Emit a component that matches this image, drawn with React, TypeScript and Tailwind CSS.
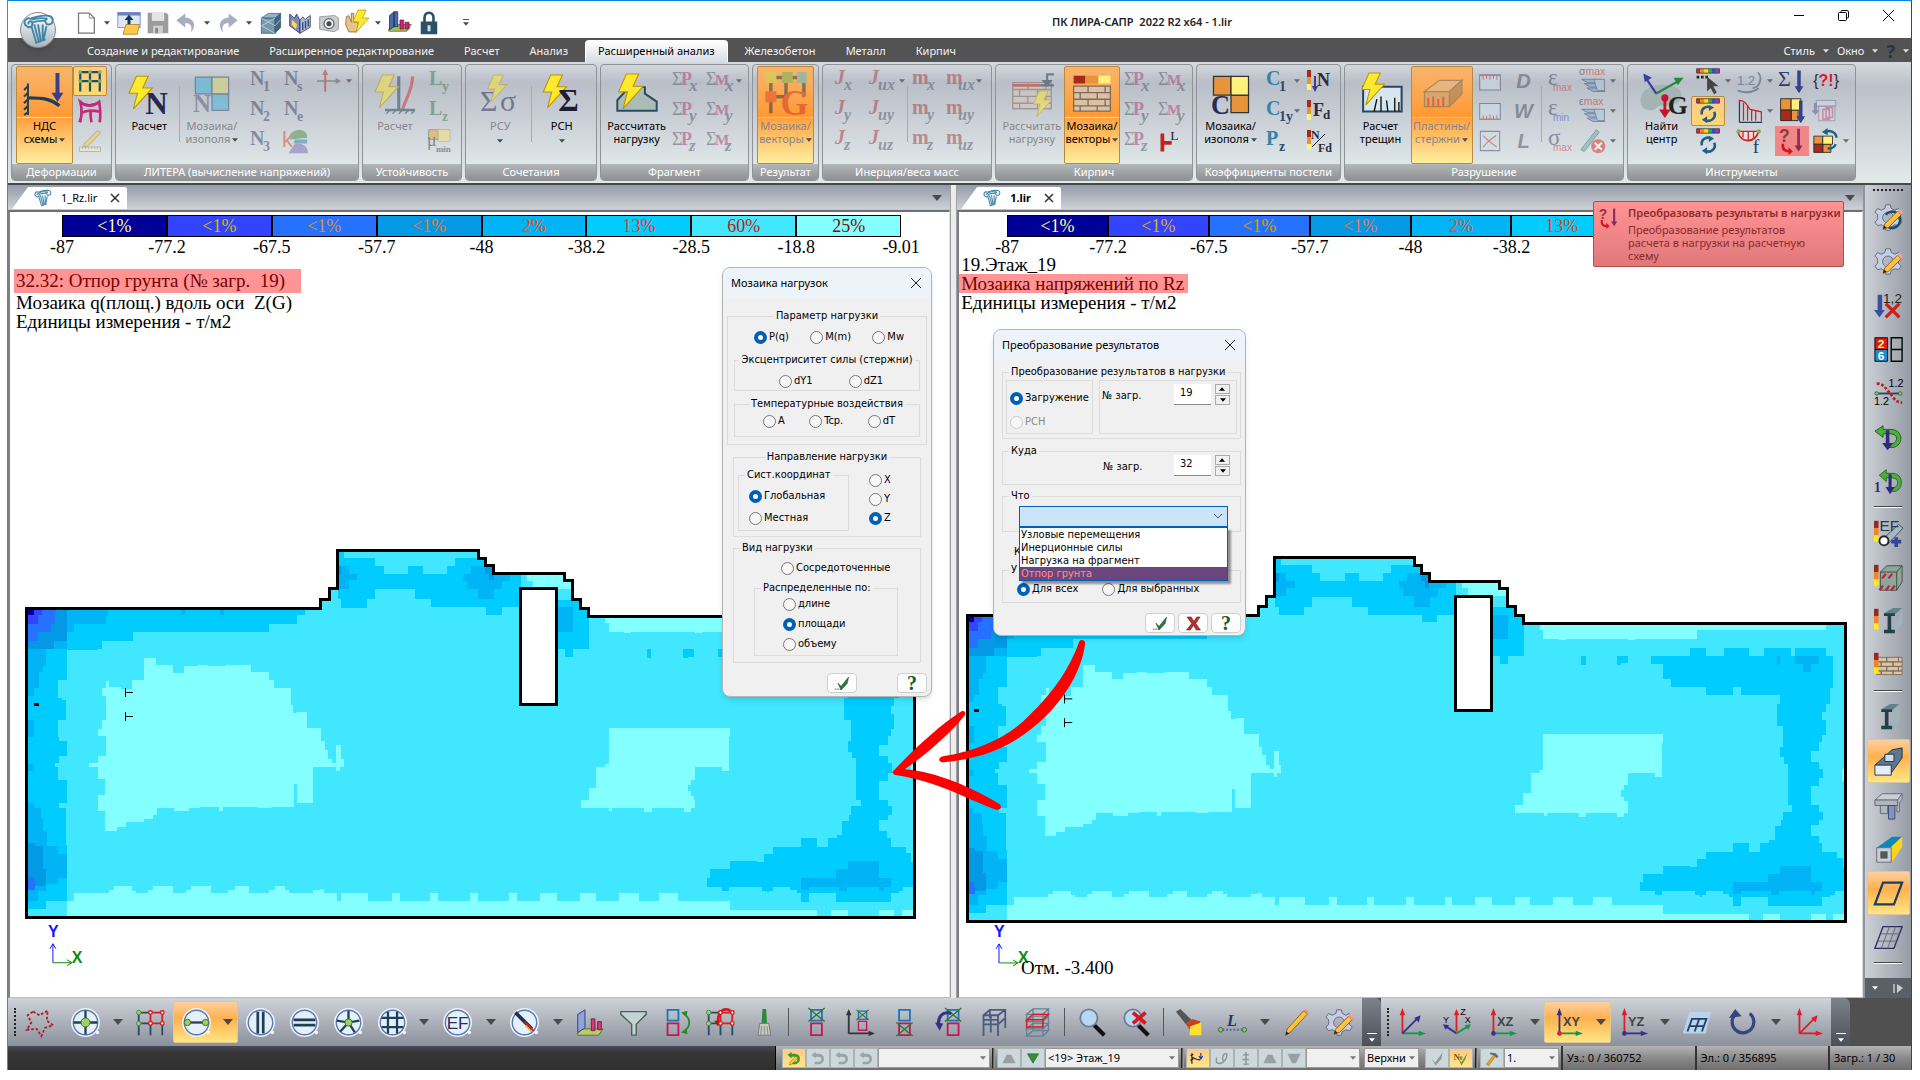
import React from 'react';

const SERIF = '"Liberation Serif", serif';

/* ---------- shared drawing helpers ---------- */

interface IconProps {
  w?: number;
  h?: number;
  box?: string;
  className?: string;
  children: React.ReactNode;
}

function Svg({ w = 28, h = 28, box = '0 0 32 32', className = '', children }: IconProps) {
  return (
    <svg width={w} height={h} viewBox={box} className={`block shrink-0 overflow-visible ${className}`} aria-hidden="true">
      {children}
    </svg>
  );
}

function Caret({ color = '#4a4a4a', big = false }: { color?: string; big?: boolean }) {
  return (
    <svg width={big ? 10 : 6} height={big ? 6 : 4} viewBox="0 0 10 6" className="block shrink-0" aria-hidden="true">
      <path d="M0 0h10L5 6z" fill={color} />
    </svg>
  );
}

const Bolt = ({ x = 0, y = 0, s = 1 }) => (
  <path
    transform={`translate(${x} ${y}) scale(${s})`}
    d="M7 0h11l-5 11h9L4 31l4-15H0z"
    fill="#ffe92e"
    stroke="#b99500"
    strokeWidth="1"
  />
);

/* letter with an index, like N1 or Cy */
function Sub({ a, b, color = '#3d3f66', subColor }: { a: string; b: string; color?: string; subColor?: string }) {
  const long = b.length > 2;
  const greek = a === 'ε' || a === 'σ';
  return (
    <Svg w={28} h={26} box="0 0 28 26">
      <text x="3" y="17" fontSize={greek ? 23 : 20} fontWeight={greek ? 'normal' : 'bold'} fontFamily={SERIF} fill={color}>{a}</text>
      <text x={long ? 8 : 16} y="23" fontSize={long ? 10 : 14} fontWeight={long ? 'normal' : 'bold'} fontFamily={long ? 'Liberation Sans' : SERIF} fill={subColor || color}>{b}</text>
    </Svg>
  );
}

/* sum sign with a coloured letter and an axis index */
function Sum({ a, b }: { a: string; b: string }) {
  return (
    <Svg w={28} h={26} box="0 0 28 26">
      <text x="1" y="17" fontSize="18" fontFamily={SERIF} fill="#505766">Σ</text>
      <text x="10" y="17" fontSize={a === 'M' ? 15 : 18} fontWeight="bold" fontFamily={SERIF} fill="#b03a76">{a}</text>
      <text x={a === 'M' ? 20 : 18} y="23" fontSize="17" fontStyle="italic" fontWeight="bold" fontFamily={SERIF} fill="#505766">{b}</text>
    </Svg>
  );
}

function Axis({ a, b, sans }: { a: string; b: string; sans?: boolean }) {
  return (
    <Svg w={32} h={26} box="0 0 32 26">
      <text x="3" y="16" fontSize="20" fontStyle={sans ? 'normal' : 'italic'} fontWeight="bold" fontFamily={SERIF} fill="#a8383f">{a}</text>
      <text x={sans ? (b.length > 1 ? 15 : 18) : 12} y="22" fontSize="16" fontStyle="italic" fontWeight="bold" fontFamily={SERIF} fill="#505766">{b}</text>
    </Svg>
  );
}

const Recycle = ({ y = 8 }) => (
  <g transform={`translate(6 ${y})`} fill="none" stroke="#1f5f85" strokeWidth="3">
    <path d="M3 11a7 7 0 0 1 10-8M17 8a7 7 0 0 1-10 9" />
    <path d="M11 0l6 3-6 4zM9 13l-6 4 6 4z" fill="#1f5f85" stroke="none" />
  </g>
);

const Palette = ({ y = 0 }) => (
  <g>
    {['#d22', '#f80', '#fd0', '#3a3', '#25c', '#a3a'].map((c, i) => (
      <rect key={c} x={3 + i * 4.4} y={y} width="4.4" height="5" fill={c} />
    ))}
    <path d={`M3 ${y}h26v5H3z`} fill="none" stroke="#444" />
  </g>
);

const DownArrow = ({ x = 0, c = '#3a3f8c' }) => <path d={`M${x} 4h4v18h3l-5 8-5-8h3z`} fill={c} />;

const Bricks = ({ dim = false }) => (
  <g fill={dim ? '#d9c8b8' : '#dcc2a4'} stroke="#7d6a5c" strokeWidth="1">
    <path d="M2 11h11v5H2zM13 11h13v5H13zM26 11h4v5h-4zM2 16h5v5H2zM7 16h13v5H7zM20 16h10v5H20zM2 21h11v5H2zM13 21h13v5H13zM26 21h4v5h-4zM2 26h5v4H2zM7 26h13v4H7zM20 26h10v4H20z" />
  </g>
);

const ConvertArt = () => (
  <>
    <text x="1" y="17" fontSize="20" fontWeight="bold" fontFamily="Liberation Sans" fill="#8e3a3a">?</text>
    <path d="M7 19v3c0 2 2 4 5 4v-3l5 5-5 4v-3c-5 0-8-3-8-7v-3z" fill="#d8141c" />
    <path d="M22 2h3v19h3l-4.500 7-4.500-7h3z" fill="#8a2a5c" />
  </>
);

/* ---------- ribbon ---------- */

interface BigProps {
  icon: React.ReactNode;
  lines: string[];
  active?: boolean;
  dim?: boolean;
  arrow?: boolean;
  className: string;
}

function Big({ icon, lines, active, dim, arrow, className }: BigProps) {
  const tone = active
    ? 'border border-[#b98a3c] bg-linear-to-b from-[#f7b56c] via-[#ff9a33] via-50% to-[#ffef9e] rounded-xs'
    : 'border border-transparent';
  return (
    <button type="button" className={`flex h-[98px] flex-col items-center ${tone} ${className}`}>
      <span className={`flex h-[51px] w-full items-center justify-center pt-1 ${active ? 'border-b border-[#fde3b0]' : ''} ${dim ? 'opacity-50' : ''}`}>{icon}</span>
      {lines.map((line, i) => (
        <span key={line} className={`flex h-[13px] items-center gap-0.5 whitespace-nowrap ${i === 0 ? 'mt-0.5' : ''} ${dim ? 'text-[#85878b]' : 'text-black'}`}>
          {line}
          {arrow && i === 1 && <Caret />}
        </span>
      ))}
      {arrow && lines.length === 1 && <span className="mt-1.5"><Caret /></span>}
    </button>
  );
}

function Small({ children, active, dim, hot, label }: { children: React.ReactNode; active?: boolean; dim?: boolean; hot?: boolean; label: string }) {
  const tone = active ? 'border border-[#b98a3c] bg-linear-to-b from-[#fbc98c] to-[#ffd96e] rounded-xs' : hot ? 'bg-[#f28686]' : '';
  return (
    <button type="button" aria-label={label} className={`flex h-[30px] w-[34px] items-center justify-center ${tone}`}>
      <span className={dim ? 'opacity-50' : ''}>{children}</span>
    </button>
  );
}

const Col = ({ children }: { children: React.ReactNode }) => <div className="flex flex-col">{children}</div>;

function Arrows({ rows }: { rows: boolean[] }) {
  return (
    <div className="flex w-2 flex-col">
      {rows.map((on, i) => (
        <span key={i} className="flex h-[30px] items-center">{on && <Caret color="#6a6a6a" />}</span>
      ))}
    </div>
  );
}

const Rule = () => <div className="mt-5 h-14 w-px shrink-0 bg-[#a7abb3]" />;

function Group({ title, className, children }: { title: string; className: string; children: React.ReactNode }) {
  return (
    <section className={`flex h-[117px] shrink-0 flex-col overflow-hidden rounded-sm border border-[#8f9398] bg-linear-to-b from-[#d2d6dd] via-[#b9bec8] via-15% to-[#e6eeee] ${className}`}>
      <div className="flex flex-1 justify-center px-1 pt-px">{children}</div>
      <h2 className="h-4 bg-linear-to-b from-[#b4b8ba] to-[#8d9191] text-center leading-4 whitespace-nowrap text-white">{title}</h2>
    </section>
  );
}

function Ribbon() {
  const xyz = ['x', 'y', 'z'];
  return (
    <div className="flex h-[121px] gap-[3px] overflow-hidden bg-linear-to-b from-[#d5d9e0] via-[#bcc1ca] via-20% to-[#e2eaea] px-[3px] pt-0.5 text-[11px]">
      <Group title="Деформации" className="w-[101px]">
        <Big className="w-[58px]" active arrow lines={['НДС', 'схемы']} icon={
          <Svg w={42} h={44}>
            <path d="M3 8v24M3 10l-3 3M3 15l-3 3M3 20l-3 3M3 25l-3 3M3 30l-3 2" stroke="#1e3f57" strokeWidth="1.5" fill="none" />
            <path d="M3 19c12 0 18 1 24 6" stroke="#1e3f57" strokeWidth="2.5" fill="none" />
            <path d="M24 0h3v15h3l-4.500 7-4.500-7h3z" fill="#3a3f8c" />
          </Svg>
        } />
        <Col>
          <Small active label="Схема">
            <Svg w={26} h={24}><path d="M3 30V4h26v26M16 4v26M3 16h26" fill="none" stroke="#1e5063" strokeWidth="3" /><g fill="#7fb34a">{[3, 16, 29].map(x => <circle key={x} cx={x} cy="4" r="2.500" />)}{[3, 16, 29].map(x => <circle key={x} cx={x} cy="16" r="2.500" />)}</g></Svg>
          </Small>
          <Small label="Деформированная схема">
            <Svg w={24} h={24}><path d="M4 2v29M4 4c6 5 16 4 24 0M29 2v29M4 19c7-5 17-4 25-2M17 31V15" fill="none" stroke="#1e3f57" strokeWidth="1.500" /><path d="M2 31c4-9 3-20 1-27 8 7 18 6 25 0 2 9 2 19 1 27M4 19c8-5 17-4 25-2M18 31c-1-6-2-10-1-15" fill="none" stroke="#c8287a" strokeWidth="3.500" /></Svg>
          </Small>
          <Small dim label="Карандаш">
            <Svg w={24} h={24}><path d="M8 20L26 2l4 3-17 18-6 1z" fill="#ffc83a" stroke="#8a6a2a" /><path d="M2 24h28v6H2z" fill="#f7efc0" stroke="#777" /><path d="M6 24v3M10 24v3M14 24v3M18 24v3M22 24v3M26 24v3" stroke="#777" /></Svg>
          </Small>
        </Col>
      </Group>

      <Group title="ЛИТЕРА (вычисление напряжений)" className="w-[244px]">
        <Big className="w-[60px]" lines={['Расчет']} icon={
          <Svg w={40} h={44}><text x="13" y="31" fontSize="25" fontWeight="bold" fontFamily={SERIF} fill="#27284d">N</text><Bolt y={1} s={0.85} /></Svg>
        } />
        <Rule />
        <Big className="w-[66px]" dim arrow lines={['Мозаика/', 'изополя']} icon={
          <Svg w={38} h={40}><path d="M2 1h14v14H2zM16 15h14v14H16z" fill="#3fb4de" stroke="#33425c" /><path d="M16 1h14v14H16z" fill="#dcdc6e" stroke="#33425c" /><text x="0" y="30" fontSize="21" fontWeight="bold" fontFamily={SERIF} fill="#555a78">N</text></Svg>
        } />
        <Col><Small dim label="N1"><Sub a="N" b="1" /></Small><Small dim label="N2"><Sub a="N" b="2" /></Small><Small dim label="N3"><Sub a="N" b="3" /></Small></Col>
        <Col><Small dim label="Ns"><Sub a="N" b="s" /></Small><Small dim label="Ne"><Sub a="N" b="e" /></Small>
          <Small dim label="k">
            <Svg w={26} h={26}><path d="M10 8c5-8 22-8 21 4l-21 2z" fill="#4f8a3a" /><path d="M16 14l15 0v5H14z" fill="#2d83b8" /><path d="M8 31h24c0-9-8-13-16-12z" fill="#7a6ab0" /><text x="0" y="23" fontSize="27" fontFamily="Liberation Sans" fill="#e0402a">k</text></Svg>
          </Small>
        </Col>
        <Col>
          <Small dim label="Оси"><Svg w={24} h={26}><path d="M11 30V4M0 16h28" stroke="#555" strokeWidth="2" /><path d="M11 30V6" stroke="#c22" strokeWidth="2.500" /><path d="M11 0l4 8H7z" fill="#c22" /><path d="M32 16l-7-4v8z" fill="#555" /></Svg></Small>
        </Col>
        <Arrows rows={[true, false, false]} />
      </Group>

      <Group title="Устойчивость" className="w-[100px]">
        <Big className="w-[56px]" dim lines={['Расчет']} icon={
          <Svg w={40} h={44}><path d="M19 1v27" stroke="#1e3f57" strokeWidth="2.500" /><path d="M30 1c0 12-5 16-8 27" stroke="#d2302c" strokeWidth="2.500" fill="none" /><path d="M8 28h24" stroke="#1e3f57" strokeWidth="2" /><path d="M12 28l-3 3M17 28l-3 3M22 28l-3 3M27 28l-3 3M32 28l-3 3" stroke="#1e3f57" /><Bolt s={0.85} /></Svg>
        } />
        <Col><Small dim label="Ly"><Sub a="L" b="y" color="#3d7a4c" /></Small><Small dim label="Lz"><Sub a="L" b="z" color="#3d7a4c" /></Small>
          <Small dim label="μmin"><Svg w={26} h={26}><path d="M2 2h12v12H2zM14 2h14v14H14z" fill="#f0a23c" stroke="#555" /><path d="M14 2h14v14H14z" fill="#f5e070" /><text x="0" y="22" fontSize="22" fontFamily={SERIF} fill="#333">μ</text><text x="11" y="30" fontSize="11" fontWeight="bold" fontFamily={SERIF} fill="#333">min</text></Svg></Small>
        </Col>
      </Group>

      <Group title="Сочетания" className="w-[132px]">
        <Big className="w-[64px]" dim arrow lines={['РСУ']} icon={
          <Svg w={40} h={44}><text x="0" y="29" fontSize="24" fontFamily={SERIF} fill="#27284d">Σ</text><text x="16" y="29" fontSize="24" fontFamily={SERIF} fill="#27284d">σ</text><Bolt x={6} s={0.7} /></Svg>
        } />
        <Rule />
        <Big className="w-[64px]" arrow lines={['РСН']} icon={
          <Svg w={40} h={44}><Bolt x={1} s={0.85} /><text x="13" y="29" fontSize="25" fontWeight="bold" fontFamily={SERIF} fill="#1d1d33">Σ</text></Svg>
        } />
      </Group>

      <Group title="Фрагмент" className="w-[149px]">
        <Big className="w-[66px]" lines={['Рассчитать', 'нагрузку']} icon={
          <Svg w={44} h={42}><path d="M1 28v-8l9-10h12v5l9 6v7z" fill="#a9bdb6" stroke="#2e4a60" strokeWidth="1.500" /><Bolt x={2} s={0.85} /></Svg>
        } />
        <Col>{xyz.map(k => <Small key={k} dim label={`ΣP${k}`}><Sum a="P" b={k} /></Small>)}</Col>
        <Col>{xyz.map(k => <Small key={k} dim label={`ΣM${k}`}><Sum a="M" b={k} /></Small>)}</Col>
        <Arrows rows={[true, false, false]} />
      </Group>

      <Group title="Результат" className="w-[67px]">
        <Big className="w-[58px]" active dim arrow lines={['Мозаика/', 'векторы']} icon={
          <Svg w={44} h={46}><path d="M5 30V4h24v14M5 18h12M16 4v14" fill="none" stroke="#234" strokeWidth="2.500" /><path d="M1 0h8v8H1z" fill="#c8d850" /><path d="M13 0h8v8h-8z" fill="#5fb85a" /><path d="M24 0h7v8h-7z" fill="#46c0d8" /><path d="M1 14h8v8H1z" fill="#e0442a" /><text x="12" y="31" fontSize="26" fontWeight="bold" fontFamily={SERIF} fill="#d2302c">G</text></Svg>
        } />
      </Group>

      <Group title="Инерция/веса масс" className="w-[170px]">
        <Col>{xyz.map(k => <Small key={k} dim label={`J${k}`}><Axis a="J" b={k} /></Small>)}</Col>
        <Col>{xyz.map(k => <Small key={k} dim label={`Ju${k}`}><Axis a="J" b={`u${k}`} /></Small>)}</Col>
        <Arrows rows={[true, false, false]} />
        <Rule />
        <Col>{xyz.map(k => <Small key={k} dim label={`m${k}`}><Axis sans a="m" b={k} /></Small>)}</Col>
        <Col>{xyz.map(k => <Small key={k} dim label={`mu${k}`}><Axis sans a="m" b={`u${k}`} /></Small>)}</Col>
        <Arrows rows={[true, false, false]} />
      </Group>

      <Group title="Кирпич" className="w-[198px]">
        <Big className="w-[66px]" dim lines={['Рассчитать', 'нагрузку']} icon={
          <Svg w={46} h={44}><g transform="translate(0 -4)"><Bricks dim /></g><path d="M2 9h20" stroke="#c22" strokeWidth="2" /><path d="M32 1h-5v8M22 9h10" stroke="#234" strokeWidth="1.500" fill="none" /><path d="M23 5h8l-4 5z" fill="#234" /><Bolt x={17} y={13} s={0.6} /></Svg>
        } />
        <Big className="w-[58px]" active arrow lines={['Мозаика/', 'векторы']} icon={
          <Svg w={44} h={42}><g transform="translate(0 -1)"><Bricks /></g><path d="M2 2h9v6H2z" fill="#a82a1c" /><path d="M11 2h10v6H11z" fill="#e8943c" /><path d="M21 2h9v6h-9z" fill="#fff27a" /></Svg>
        } />
        <Col>{xyz.map(k => <Small key={k} dim label={`ΣP${k}`}><Sum a="P" b={k} /></Small>)}</Col>
        <Col><Small dim label="ΣMx"><Sum a="M" b="x" /></Small><Small dim label="ΣMy"><Sum a="M" b="y" /></Small>
          <Small label="L"><Svg w={24} h={26}><path d="M2 6h5v24H2zM7 16h10v5H7z" fill="#c4221c" /><text x="15" y="15" fontSize="18" fontFamily={SERIF} fill="#222">L</text></Svg></Small>
        </Col>
      </Group>

      <Group title="Коэффициенты постели" className="w-[145px]">
        <Big className="w-[60px]" arrow lines={['Мозаика/', 'изополя']} icon={
          <Svg w={40} h={42}><path d="M2 1h14v15H2zM16 16h14v14H16z" fill="#e8943c" stroke="#333" /><path d="M16 1h14v15H16z" fill="#fff27a" stroke="#333" /><text x="0" y="31" fontSize="21" fontWeight="bold" fontFamily={SERIF} fill="#2b2c55">C</text></Svg>
        } />
        <Col><Small label="C1"><Sub a="C" b="1" color="#3483a8" subColor="#2b4a66" /></Small><Small label="C1y"><Sub a="C" b="1y" color="#3483a8" subColor="#2b4a66" /></Small><Small label="Pz"><Sub a="P" b="z" color="#3483a8" subColor="#2b4a66" /></Small></Col>
        <Arrows rows={[true, true, false]} />
        <Col>
          {['N', 'Fd', 'N/Fd'].map((k, i) => (
            <Small key={k} label={k}>
              <Svg w={26} h={26} box="0 0 26 26">
                <path d="M1 2h4v7H1z" fill="#a82a1c" /><path d="M1 9h4v7H1z" fill="#e8943c" /><path d="M1 16h4v6H1z" fill="#fff27a" />
                {i === 0 && <path d="M8 8h2v10h2l-3 6-3-6h2z" fill="#3a3f8c" />}
                {i < 2 && <text x={i === 0 ? 11 : 7} y="18" fontSize="18" fontWeight="bold" fontFamily={SERIF} fill="#2b2c40">{k[0]}</text>}
                {i === 1 && <text x="17" y="21" fontSize="13" fontWeight="bold" fontFamily={SERIF} fill="#2b2c40">d</text>}
                {i === 2 && <><text x="5" y="11" fontSize="12" fontWeight="bold" fontFamily={SERIF} fill="#2b2c40">N</text><path d="M6 19L19 6" stroke="#222" /><text x="12" y="24" fontSize="12" fontWeight="bold" fontFamily={SERIF} fill="#2b2c40">Fd</text></>}
              </Svg>
            </Small>
          ))}
        </Col>
      </Group>

      <Group title="Разрушение" className="w-[280px]">
        <Big className="w-[60px]" lines={['Расчет', 'трещин']} icon={
          <Svg w={44} h={44}><path d="M3 10h28v18H3z" fill="#d6e6f0" stroke="#29475c" strokeWidth="1.500" /><path d="M11 28l2-9M16 28v-11M21 28l-1-8M26 28v-10M29 28v-7" stroke="#111" /><Bolt x={2} s={0.75} /></Svg>
        } />
        <Big className="w-[62px]" active dim arrow lines={['Пластины/', 'стержни']} icon={
          <Svg w={44} h={40}><path d="M2 14L14 5h18L22 14z" fill="#d4c0a8" stroke="#666" /><path d="M2 14h20v12H2z" fill="#b6a590" stroke="#666" /><path d="M22 14L32 5v11L22 26z" fill="#8d7c68" stroke="#666" /><path d="M5 26v-7M9 26v-8M13 26v-6M17 26v-8" stroke="#c22" strokeWidth="1.500" /></Svg>
        } />
        <Col>
          <Small dim label="Трещины сверху"><Svg w={24} h={22}><path d="M1 7h30v22H1z" fill="#cfe0ea" stroke="#446" strokeWidth="1.500" /><path d="M1 8h30M6 8v6M11 8v5M16 8v6M21 8v5M26 8v6" stroke="#c22" strokeWidth="1.500" /></Svg></Small>
          <Small dim label="Трещины снизу"><Svg w={24} h={22}><path d="M1 5h30v23H1z" fill="#cfe0ea" stroke="#446" strokeWidth="1.500" /><path d="M1 28h30M6 28v-6M11 28v-5M16 28v-7M21 28v-5M26 28v-6" stroke="#c22" strokeWidth="1.500" /></Svg></Small>
          <Small dim label="Трещины"><Svg w={22} h={22}><path d="M2 2h28v28H2z" fill="#cfe0ea" stroke="#446" strokeWidth="1.500" /><path d="M6 8l8 8 11-8M14 16l12 9M14 16l-8 9" stroke="#c22" strokeWidth="1.500" fill="none" /></Svg></Small>
        </Col>
        <Col>
          {['D', 'W', 'L'].map(k => (
            <Small key={k} dim label={k}><span className="font-['Liberation_Sans'] text-xl font-bold text-[#4a4f58] italic">{k}</span></Small>
          ))}
        </Col>
        <Rule />
        <Col><Small dim label="εmax"><Sub a="ε" b="max" subColor="#d2302c" /></Small><Small dim label="εmin"><Sub a="ε" b="min" subColor="#3a3fd0" /></Small><Small dim label="σmax"><Sub a="σ" b="max" subColor="#d2302c" /></Small></Col>
        <Col>
          {['σ', 'ε'].map(k => (
            <Small key={k} dim label={`${k}max слои`}>
              <Svg w={28} h={28}><text x="0" y="9" fontSize="12" fontFamily="Liberation Sans" fill="#333">{k}<tspan fill="#c22">max</tspan></text><path d="M3 14h16l7 4H10zM6 19h16l7 4H13zM9 24h14l7 4H16z" fill="#6aa8d8" stroke="#335" /><path d="M17 14h12v13H21z" fill="#a8c8dc" stroke="#335" /></Svg>
            </Small>
          ))}
          <Small dim label="Удалить трещину"><Svg w={28} h={28}><path d="M2 26L20 3l3 3L6 28z" fill="#6aa" stroke="#355" /><circle cx="22" cy="22" r="8" fill="#d8281c" /><path d="M18 18l8 8M26 18l-8 8" stroke="#fff" strokeWidth="2.500" /></Svg></Small>
        </Col>
        <Arrows rows={[true, true, true]} />
      </Group>

      <Group title="Инструменты" className="w-[229px]">
        <Big className="w-[60px]" lines={['Найти', 'центр']} icon={
          <Svg w={46} h={46}><path d="M1 20c0-8 9-12 18-11s12 4 10 10c-4 6-14 3-17 6S1 27 1 20z" fill="#a4b4b4" /><path d="M12 15l16-9" fill="none" stroke="#238a3c" strokeWidth="1.500" /><path d="M4 3l8 12" stroke="#3a3fa0" strokeWidth="1.500" /><path d="M3 1l6 3-5 3z" fill="#3a3fa0" /><path d="M31 4l-7 0 3 5z" fill="#238a3c" /><path d="M18 18v10" stroke="#c4142c" strokeWidth="2" /><circle cx="18" cy="18" r="2.500" fill="#c4142c" /><path d="M14 26h8l-4 6z" fill="#c4142c" /><text x="20" y="29" fontSize="18" fontWeight="bold" fontFamily={SERIF} fill="#222">G</text></Svg>
        } />
        <Col>
          <Small label="Шкала"><Svg w={28} h={28}><Palette y={2} /><path d="M3 10h3v3H3zM8 10h3v3H8zM13 10h3v3h-3z" fill="#222" /><path d="M15 11v17l4-4 4 7 3-2-4-7h6z" fill="#444" /></Svg></Small>
          <Small active label="Обновить шкалу"><Svg w={28} h={28}><Palette y={2} /><Recycle y={9} /></Svg></Small>
          <Small label="Обновить"><Svg w={28} h={28}><Palette y={2} /><Recycle y={10} /></Svg></Small>
        </Col>
        <Arrows rows={[true, false, false]} />
        <Col>
          <Small dim label="1.2"><Svg w={28} h={28}><text x="1" y="20" fontSize="15" fontFamily="Liberation Sans" fill="#2d4a68">1.2</text><path d="M25 6c6 6 2 18-6 18M2 27c9 3 18 2 24-3" stroke="#2d4a68" strokeWidth="2" fill="none" /></Svg></Small>
          <Small label="Эпюра"><Svg w={26} h={26}><path d="M3 30h28M3 4v26" stroke="#1e3f57" strokeWidth="1.500" /><path d="M2 3c8 0 10 5 14 11l14 3v12M8 6v22M13 9v19M18 15v13M23 16v12" stroke="#c22" strokeWidth="1.500" fill="none" /></Svg></Small>
          <Small label="Прогиб"><Svg w={28} h={28}><path d="M2 5c4 14 19 14 24 0" fill="#f7dede" stroke="#c22" strokeWidth="2" /><path d="M2 5h25M8 5v7M14 5v10M20 5v7" stroke="#c22" strokeWidth="1.500" /><circle cx="3" cy="5" r="2.500" fill="#7fb34a" /><circle cx="26" cy="5" r="2.500" fill="#7fb34a" /><text x="19" y="30" fontSize="22" fontFamily={SERIF} fill="#1e3f57">f</text></Svg></Small>
        </Col>
        <Arrows rows={[true, true, false]} />
        <Col>
          <Small label="Сумма"><Svg w={28} h={28}><text x="0" y="22" fontSize="25" fontFamily={SERIF} fill="#333c66">Σ</text><DownArrow x={22} /></Svg></Small>
          <Small label="Мозаика в нагрузку"><Svg w={28} h={28}><path d="M3 2h12v13H3zM15 15h8v12h-8z" fill="#e8943c" stroke="#222" /><path d="M15 2h11v13H15z" fill="#fff27a" stroke="#222" /><path d="M3 15h12v12H3z" fill="#a82a1c" stroke="#222" /><DownArrow x={24} /></Svg></Small>
          <Small hot label="Преобразовать результаты в нагрузки"><Svg><ConvertArt /></Svg></Small>
        </Col>
        <Col>
          <Small label="?!"><span className="font-['Liberation_Sans'] text-base text-[#333]">{'{'}<b className="text-[#e0142c]">?!</b>{'}'}</span></Small>
          <Small dim label="Копировать"><Svg w={26} h={26}><path d="M4 3h24v7H4zM7 10h20v18H7z" fill="#dcd8ea" stroke="#5a5a88" /><path d="M5 6v9h3l-5 6-5-6h3V6z" fill="#5a5a88" /><path d="M12 14h8v12h-8zM16 12h8v12h-8z" fill="none" stroke="#d24a7a" strokeWidth="2" /></Svg></Small>
          <Small label="Обновить мозаику"><Svg w={26} h={26}><path d="M1 10h11v10H1zM12 20h10v10H12z" fill="#e8943c" stroke="#222" /><path d="M12 10h12v10H12z" fill="#fff27a" stroke="#222" /><path d="M1 20h11v10H1z" fill="#a82a1c" stroke="#222" /><path d="M14 6a9 9 0 0 1 15 6M28 20a9 9 0 0 1-10 5" fill="none" stroke="#1f5f85" strokeWidth="3" /><path d="M18 0v9l-7-4z" fill="#1f5f85" /></Svg></Small>
        </Col>
        <Arrows rows={[false, false, true]} />
      </Group>
    </div>
  );
}

/* ---------- title bar and tabs ---------- */

function Temple({ size = 18 }) {
  return (
    <Svg w={size} h={size}>
      <g fill="none" stroke="#3f86a8" strokeWidth="2">
        <path d="M4 12c-5-4-1-10 4-8 8-3 14-4 20-3 5 1 5 8 0 9-4 1-6-5-2-6" />
        <path d="M4 12c4 3 8-2 5-5-2-1-4 1-3 3M9 5c6-2 12-2 17-1M10 8c5-2 10-2 14-2" />
        <path d="M9 12l5 17M12 10l5 19M16 10l3 18M21 10v17M25 12l-3 14" />
        <path d="M13 30l11-4" />
      </g>
    </Svg>
  );
}

const quick: { name: string; icon: React.ReactNode; arrow?: boolean }[] = [
  { name: 'Новый', arrow: true, icon: <Svg w={20} h={24} box="0 0 24 28"><path d="M3 2h13l6 6v18H3z" fill="#fff" stroke="#777" strokeWidth="1.500" /><path d="M16 2v6h6" fill="none" stroke="#777" /></Svg> },
  { name: 'Открыть', icon: <Svg w={24} h={24}><path d="M1 2h30v20H1z" fill="#dce6f5" stroke="#6a7fc0" /><path d="M1 2h30v4H1z" fill="#6a7fc0" /><path d="M14 22V12h-4l6-7 6 7h-4v10z" fill="#16365c" /><path d="M8 31l4-13h18l-3 13z" fill="#ffc84a" stroke="#a87820" /></Svg> },
  { name: 'Сохранить', icon: <Svg w={22} h={22}><path d="M1 1h27l3 3v27H1z" fill="#9c9c9c" /><path d="M7 1h18v12H7z" fill="#e4e4e4" /><path d="M9 20h14v11H9z" fill="#d0d0d0" /><path d="M12 23h4v8h-4z" fill="#888" /></Svg> },
  { name: 'Отменить', arrow: true, icon: <Svg w={22} h={22}><path d="M2 12L15 2v6c13 1 17 12 8 22 3-10-1-14-8-14v7z" fill="#a7aebf" /></Svg> },
  { name: 'Повторить', arrow: true, icon: <Svg w={22} h={22}><path d="M30 12L17 2v6C4 9 0 20 9 30 6 20 10 16 17 16v7z" fill="#a7aebf" /></Svg> },
  { name: 'Модель', icon: <Svg w={22} h={24}><path d="M2 9L12 2h18l-8 7z" fill="#8fb4cc" stroke="#2d5068" /><path d="M2 9h20v22H2z" fill="#7797ab" stroke="#2d5068" /><path d="M22 9l8-7v20l-8 9z" fill="#3f6680" stroke="#2d5068" /><path d="M2 9l20 11M2 20l20 11M2 20L22 9M22 20l8-9" stroke="#cfe4f0" /></Svg> },
  { name: 'Книга', icon: <Svg w={22} h={22}><path d="M1 3l7 6 3-6 5 9v19L1 20z" fill="#7a86c8" stroke="#223" /><path d="M31 5l-8 6-3-4-4 5v19l15-9z" fill="#a8b6e8" stroke="#223" /><path d="M4 11l8 7-2 7-6-6z" fill="#ffd84a" /><path d="M20 15v11M24 13v11M28 11v10" stroke="#446" strokeWidth="2" /></Svg> },
  { name: 'Камера', icon: <Svg w={22} h={20}><path d="M1 6l24-2 6 4v18l-7 4L1 26z" fill="#c9ccce" stroke="#777" /><circle cx="16" cy="17" r="8" fill="#eee" stroke="#666" strokeWidth="2" /><circle cx="16" cy="17" r="4" fill="#445" /></Svg> },
  { name: 'Быстрый расчет', arrow: true, icon: <Svg w={26} h={26}><path d="M3 8l3-1 3 8V4h3v11h4l2 4-3 8H6L2 18z" fill="#e8c48a" stroke="#8a6a3a" /><Bolt x={11} y={0} s={0.9} /></Svg> },
  { name: 'Диаграмма', icon: <Svg w={24} h={24}><path d="M1 24l10-6h20l-6 9H1z" fill="#a8bf5a" stroke="#5a6a2a" /><path d="M2 6l6-5v20l-6 4zM8 1h5v20H8z" fill="#4a6aa8" stroke="#1d2d5a" /><path d="M16 12h5v12h-5z" fill="#c8287a" stroke="#7a1448" /><path d="M23 15h5v9h-5z" fill="#c8287a" stroke="#7a1448" /></Svg> },
  { name: 'Замок', icon: <Svg w={20} h={24} box="0 0 26 32"><path d="M7 15V9c0-9 12-9 12 0v6" fill="none" stroke="#2e4f68" strokeWidth="3.500" /><path d="M2 14h22v17H2z" fill="#2e4f68" /><path d="M11 19h4v8h-4z" fill="#cfdde8" /></Svg> },
];

function TitleBar() {
  return (
    <header className="flex h-[37px] items-center bg-white pt-1.5 pl-16">
      <nav className="flex items-center">
        {quick.map(q => (
          <React.Fragment key={q.name}>
            <button type="button" aria-label={q.name} className={`flex items-center justify-center ${q.arrow ? 'w-7' : 'w-[29px]'}`}>{q.icon}</button>
            {q.arrow && <span className="flex w-3.5 justify-center"><Caret /></span>}
          </React.Fragment>
        ))}
        <span className="ml-5 flex flex-col items-center gap-0.5"><i className="h-px w-1.5 bg-[#555]" /><Caret /></span>
      </nav>
      <h1 className="flex-1 pl-[244px] text-center text-[11px] font-semibold whitespace-pre text-[#222]">ПК ЛИРА-САПР  2022 R2 x64 - 1.lir</h1>
      <div className="flex w-[340px] items-start justify-end self-start">
        <button type="button" aria-label="Свернуть" className="flex h-4 w-[45px] items-center justify-center"><i className="h-px w-2.5 bg-black" /></button>
        <button type="button" aria-label="Восстановить" className="flex h-4 w-[45px] items-center justify-center"><Svg w={11} h={11} box="0 0 11 11"><path d="M3 2.500V1.500a1 1 0 0 1 1-1h5a1.500 1.500 0 0 1 1.500 1.500v5a1 1 0 0 1-1 1h-1M1.500 2.500h6a1 1 0 0 1 1 1v6a1 1 0 0 1-1 1h-6a1 1 0 0 1-1-1v-6a1 1 0 0 1 1-1z" fill="none" stroke="#000" /></Svg></button>
        <button type="button" aria-label="Закрыть" className="flex h-4 w-[45px] items-center justify-center"><Svg w={11} h={11} box="0 0 11 11"><path d="M0 0l11 11M11 0L0 11" stroke="#000" /></Svg></button>
      </div>
    </header>
  );
}

const tabs = ['Создание и редактирование', 'Расширенное редактирование', 'Расчет', 'Анализ', 'Расширенный анализ', 'Железобетон', 'Металл', 'Кирпич'];

function TabStrip() {
  return (
    <nav className="relative flex h-6 items-end bg-[#535353] pl-16 text-[11px] text-[#f2f2f2]">
      <button type="button" aria-label="Меню" className="absolute -top-[26px] left-3 flex size-9 items-center justify-center rounded-full border border-[#888] bg-linear-to-b from-white via-[#d4dade] to-[#a9b4ba] shadow-md">
        <Temple size={30} />
      </button>
      {tabs.map(t => (
        <button
          key={t}
          type="button"
          className={`h-[22px] whitespace-nowrap ${t === 'Расширенный анализ' ? 'mx-0.5 rounded-t-sm border border-b-0 border-white bg-linear-to-b from-white to-[#d8dce4] px-3 text-black' : 'px-[15px]'}`}
        >
          {t}
        </button>
      ))}
      <div className="ml-auto flex h-[22px] items-center gap-2 pr-0.5">
        <span>Стиль</span><Caret color="#ddd" />
        <span>Окно</span><Caret color="#ddd" />
        <b className="text-lg leading-none text-[#26344c]">?</b><Caret color="#ddd" />
      </div>
    </nav>
  );
}

/* ---------- stress plan ---------- */

const C = { n1: '#000099', n2: '#3344ff', n3: '#2671ff', n4: '#0499e5', n5: '#00b4f5', n6: '#00ccff', n7: '#41e6ff', n8: '#83ffff' };

const OUTLINE = 'M58 236H700V211H718V178H736V62H1045V86H1060V109H1077V133H1232V154H1249V211H1267V236H1285V260H1995V1165H58Z';

function PlanShape() {
  return (
    <g transform="translate(0 530) scale(.4592 .33333)" shapeRendering="crispEdges">
      <path d={OUTLINE} fill={C.n7} />
      <path fill={C.n6} d="M60 240H666V258H649V283H588V309H291V336H222V360H213V363H146V453H126V505H135V513H144V573H126V622H128V636H146V681H128V702H120V714H127V753H146V822H128V836H144V948H146V1116H100V1140H60Z" />
      <path fill={C.n5} d="M60 240H236V261H231V283H161V309H146V360H100V411H94V429H85V477H74V501H60ZM394 240h9v18h-9zM479 240h9v18h-9zM60 573h14v51h-14zM60 705h14v20h-14zM60 822H74V836H90V870H94V906H102V951H126V975H146V1046H126V1066H100V1087H83V1116H60Z" />
      <path fill={C.n4} d="M60 240H146V336H118V360H60ZM60 942H76V951H94V1020H100V1072H75V1084H60Z" />
      <path fill={C.n3} d="M60 240H120V283H111V309H83V336H60ZM60 1045H74V1060H76V1083H60Z" />
      <path fill={C.n2} d="M60 240H91V258H83V283H60Z" />
      <path fill={C.n1} d="M60 240H74V258H60Z" />
      <path fill={C.n6} d="M738 65H751V84H819V108H837V132H891V108H923V132H976V108H993V84H1045V86H1060V109H1077V136H1137V234H1095V258H1061V234H941V210H906V180H819V210H801V236H745V210H738ZM1217 211H1267V236H1285V360H1250V384H1233V360H1217Z" />
      <path fill={C.n5} d="M738 108H762V132H780V153H762V178H738ZM1027 109H1077V136H1113V154H1096V180H1078V210H1043V178H1020V154H1010V132H1027ZM1217 234H1250V309H1217Z" />
      <path fill={C.n4} d="M738 108H745V132H738ZM1058 109H1077V153H1068V132H1058Z" />
      <path fill={C.n8} d="M1149 137H1230V157H1247V178H1163V154H1149Z" />
      <path fill={C.n8} d="M314 387H340V408H377V430H401V411H433V408H453V411H494V408H547V429H588V453H597V477H634V527H640V552H649V549H669V597H701V636H709V662H716V690H725V702H734V648H745V690H751V714H742V726H734V714H684V822H649V765H642V833H592V836H563V833H486V846H477V833H436V837H412V846H379V837H342V858H333V870H314V879H274V894H255V906H229V846H213V798H229V750H213V714H194V702H213V681H231V621H213V600H222V573H231V501H222V477H231V456H238V474H264V480H287V453H314Z" />
      <path fill={C.n8} d="M146 1161V1116H161V1092H237V1084H248V1072H287V1087H296V1092H322V1084H333V1072H377V1092H405V1084H416V1072H460V1092H498V1084H512V1072H544V1092H588V1084H599V1072H622V1084H631V1092H684V1084H699V1080H708V1092H736V1116H745V1092H803V1116H856V1092H873V1116H939V1092H956V1116H1026V1092H1043V1116H1111V1092H1128V1116H1178V1092H1215V1116H1265V1092H1300V1116H1350V1092H1394V1116H1437V1092H1479V1116H1593V1143H1782V1161Z" />
      <g transform="translate(746.6 68.2) scale(.8998 1.0121)">
        <path fill={C.n8} d="M638 194H1338V210H1024V237H872V240H855V237H701V240H684V237H647V210H638ZM1186 1062h41v19h-41zM1303 1062h35v19h-35zM1357 1062h28v19h-28zM1379 627h8v36h-8z" />
        <path fill={C.n6} d="M740 288h10v26h-10zM826 288h27v22h-15v4h-12zM911 288H1007V264H1046V288H1090V264H1151V288H1188V264H1254V288H1262V264H1338V288H1357V384H1350V432H1338V456H1330V480H1338V525H1330V545H1323V573H1303V606H1323V627H1333V655H1323V678H1303V736H1323V755H1333V781H1323V795H1303V828H1321V850H1330V876H1367V894H1380V920H1384V993H1360V1005H1350V1011H1330V1038H1198V1011H1132V1038H1112V1011H1102V1002H1086V993H1044V1005H1036V1010H1030V1005H1018V993H938V1005H921V993H884V966H892V941H941V918H1007V920H1024V897H1044V876H1112V850H1151V876H1178V850H1200V840H1213V798H1230V781H1235V755H1257V736H1247V655H1245V611H1237V592H1226V561H1235V498H1218V432H1227V405H1132V381H1112V405H1046V381H960V357H941V312H911Z" />
        <path fill={C.n5} d="M1218 288h9v26h-9zM1262 288H1323V312H1303V336H1284V312H1262ZM1227 918H1303V966H1330V993H1313V1005H1303V993H1225V1005H1205V993H1132V1002H1112V966H1197V941H1227Z" />
        <path fill={C.n8} d="M647 522H941V549H938V651H921V639H855V675H845V690H838V710H845V723H853V736H855V759H845V771H828V759H751V770H733V759H655V767H648V759H578V736H598V699H616V639H638V630H647Z" />
      </g>
      <path d="M1135 178H1215V526H1135Z" fill="#fff" stroke="#000" strokeWidth="3" vectorEffect="non-scaling-stroke" />
      <path d={OUTLINE} fill="none" stroke="#000" strokeWidth="3" vectorEffect="non-scaling-stroke" />
      <path d="M74 521h11v10H74z" />
      <path d="M273 477v27M273 490h17M273 549v27M273 562h17" stroke="#000" strokeWidth="1" vectorEffect="non-scaling-stroke" />
    </g>
  );
}

function Axes({ x, y }: { x: number; y: number }) {
  return (
    <g transform={`translate(${x} ${y})`} fontFamily="Liberation Sans" fontWeight="bold" fontSize="16">
      <text x="-5" y="-26" fill="#1414ff">Y</text>
      <path d="M0 0V-19M-3-14l3-5 3 5" fill="none" stroke="#1414ff" />
      <path d="M0 0h19M14-3l5 3-5 3" fill="none" stroke="#108a10" />
      <text x="19" y="0" fill="#108a10">X</text>
    </g>
  );
}

/* ---------- document panes ---------- */

const scale = [
  { p: '<1%', bg: 'bg-[#000099]', fg: 'text-[#ffff8c]' },
  { p: '<1%', bg: 'bg-[#3344ff]', fg: 'text-[#d9b300]' },
  { p: '<1%', bg: 'bg-[#2671ff]', fg: 'text-[#d99800]' },
  { p: '<1%', bg: 'bg-[#0499e5]', fg: 'text-[#e87444]' },
  { p: '2%', bg: 'bg-[#00b4f5]', fg: 'text-[#f25018]' },
  { p: '13%', bg: 'bg-[#00ccff]', fg: 'text-[#f03c14]' },
  { p: '60%', bg: 'bg-[#41e6ff]', fg: 'text-[#c01c10]' },
  { p: '25%', bg: 'bg-[#83ffff]', fg: 'text-[#800a0a]' },
];
const marks = ['-87', '-77.2', '-67.5', '-57.7', '-48', '-38.2', '-28.5', '-18.8', '-9.01'];

function Scale({ className }: { className: string }) {
  return (
    <div className={`text-[18px] leading-5 ${className}`}>
      <div className="flex">
        {scale.map((s, i) => (
          <div key={i} className={`flex-1 border border-black text-center ${s.bg} ${s.fg}`}>{s.p}</div>
        ))}
      </div>
      <div className="flex justify-between">
        {marks.map(m => <span key={m} className="flex w-0 justify-center whitespace-nowrap">{m}</span>)}
      </div>
    </div>
  );
}

function Pane({ name, bold, className, children }: { name: string; bold?: boolean; className: string; children: React.ReactNode }) {
  return (
    <section className={`flex min-w-0 flex-col bg-white ${className}`}>
      <div className="flex h-[25px] items-end justify-between border-b border-[#c4c8ce] bg-linear-to-b from-[#959ca8] to-[#cdd0d6] pr-2 pl-1">
        <div className="flex h-[22px] items-center gap-3.5 rounded-t-xs bg-white pr-2 pl-[22px] [clip-path:polygon(16px_0,100%_0,100%_100%,0_100%)]">
          <Temple size={17} />
          <span className={`-ml-1 text-[11px] ${bold ? 'font-bold' : ''}`}>{name}</span>
          <button type="button" aria-label="Закрыть вкладку"><Svg w={8} h={8} box="0 0 8 8"><path d="M0 0l8 8M8 0L0 8" stroke="#333" strokeWidth="1.500" /></Svg></button>
        </div>
        <span className="pb-2"><Caret big /></span>
      </div>
      <div className="flex flex-1 flex-col border-t-2 border-r border-b border-l-2 border-t-[#6d6f76] border-r-[#ddd] border-b-[#bbb] border-l-[#7d7f86] bg-white pt-[3px] font-['Liberation_Serif',serif] text-black">
        {children}
      </div>
    </section>
  );
}

/* ---------- dialogs ---------- */

interface RadioProps {
  name: string;
  label: string;
  checked?: boolean;
  disabled?: boolean;
  className?: string;
}

function Radio({ name, label, checked, disabled, className = '' }: RadioProps) {
  return (
    <label className={`flex h-3.5 items-center gap-0.5 whitespace-nowrap ${disabled ? 'text-[#8b8b8b]' : ''} ${className}`}>
      <input
        type="radio"
        name={name}
        defaultChecked={checked}
        disabled={disabled}
        className="size-[13px] shrink-0 appearance-none rounded-full border border-[#777] bg-[#f7f7f7] checked:border-4 checked:border-[#005fb8] checked:bg-white disabled:border-[#ccc]"
      />
      {label}
    </label>
  );
}

/* the padding sits on the inner box so that it does not push the legend */
function Box({ legend, center, className = '', inner = '', children }: { legend: string; center?: boolean; className?: string; inner?: string; children: React.ReactNode }) {
  return (
    <fieldset className={`min-w-0 border border-[#dcdcdc] ${className}`}>
      <legend className={`px-0.5 leading-4 whitespace-nowrap ${center ? 'mx-auto' : 'ml-1.5'}`}>{legend}</legend>
      <div className={inner}>{children}</div>
    </fieldset>
  );
}

function DialogButton({ kind }: { kind: 'ok' | 'no' | 'help' }) {
  const names = { ok: 'ОК', no: 'Отмена', help: 'Справка' };
  return (
    <button type="button" aria-label={names[kind]} className="flex h-5 w-[30px] items-center justify-center rounded-sm border border-[#d0d0d0] bg-[#fdfdfd]">
      {kind === 'ok' && <Svg w={17} h={15}><path d="M6 15l7 7L29 2l-3 14-13 14z" fill="#2a7a3c" stroke="#14401e" /><path d="M0 28h3M5 28h3M10 28h3" stroke="#444" strokeWidth="2" /></Svg>}
      {kind === 'no' && <Svg w={15} h={15}><path d="M2 2h9l6 9 6-9h7L21 16l10 14h-9l-6-10-7 10H1l11-14z" fill="#b8302c" stroke="#6a1010" /></Svg>}
      {kind === 'help' && <b className="font-['Liberation_Serif'] text-xl leading-none text-[#1e5a30]">?</b>}
    </button>
  );
}

function Dialog({ title, tint, className, children }: { title: string; tint: string; className: string; children: React.ReactNode }) {
  return (
    <section role="dialog" aria-label={title} className={`absolute overflow-hidden rounded-lg border border-[#b4b4b4] bg-[#f0f0f0] font-['DejaVu_Sans_Condensed','Noto_Sans',sans-serif] text-[11px] text-black shadow-md ${className}`}>
      <header className={`flex h-[30px] items-center justify-between pr-2.5 pl-2 font-['Noto_Sans',sans-serif] ${tint}`}>
        <h2>{title}</h2>
        <button type="button" aria-label="Закрыть"><Svg w={10} h={10} box="0 0 10 10"><path d="M0 0l10 10M10 0L0 10" stroke="#222" /></Svg></button>
      </header>
      {children}
    </section>
  );
}

function LoadsDialog() {
  return (
    <Dialog title="Мозаика нагрузок" tint="bg-[#ecf4f9]" className="top-[82px] left-[714px] w-[210px]">
      <div className="px-1 pt-2.5">
        <Box legend="Параметр нагрузки" center inner="px-1.5 pb-[7px]">
          <div className="flex justify-between pt-1.5 pr-4 pl-5">
            <Radio name="param" label="P(q)" checked /><Radio name="param" label="M(m)" /><Radio name="param" label="Mw" />
          </div>
          <Box legend="Эксцентриситет силы (стержни)" center className="mt-2" inner="flex gap-9 pt-1.5 pb-0.5 pl-11">
            <Radio name="ecc" label="dY1" /><Radio name="ecc" label="dZ1" />
          </Box>
          <Box legend="Температурные воздействия" center className="mt-[5px]" inner="flex justify-between pt-0.5 pr-6 pb-2 pl-7">
            <Radio name="temp" label="A" /><Radio name="temp" label="Tcp." /><Radio name="temp" label="dT" />
          </Box>
        </Box>
        <Box legend="Направление нагрузки" center className="mx-1.5 mt-1" inner="flex gap-5 pb-[5px] pl-1">
          <Box legend="Сист.координат" className="mt-0.5 w-[111px]" inner="flex flex-col gap-2 pt-1.5 pb-[5px] pl-2.5">
            <Radio name="cs" label="Глобальная" checked /><Radio name="cs" label="Местная" />
          </Box>
          <div className="flex flex-col gap-[5px] pt-2">
            <Radio name="dir" label="X" /><Radio name="dir" label="Y" /><Radio name="dir" label="Z" checked />
          </div>
        </Box>
        <Box legend="Вид нагрузки" className="mx-1.5 mt-[3px]" inner="pb-1.5 pl-5">
          <Radio name="kind" label="Сосредоточенные" className="mt-[5px] ml-[27px]" />
          <Box legend="Распределенные по:" className="mt-[5px] w-[144px]" inner="flex flex-col gap-1.5 pt-px pb-1 pl-7">
            <Radio name="kind2" label="длине" /><Radio name="kind2" label="площади" checked /><Radio name="kind2" label="объему" />
          </Box>
        </Box>
        <div className="flex justify-end gap-10 pt-2.5 pb-[3px]">
          <DialogButton kind="ok" /><DialogButton kind="help" />
        </div>
      </div>
    </Dialog>
  );
}

function Stepper({ id, value }: { id: string; value: string }) {
  return (
    <div className="flex w-full items-start justify-between pr-1.5 pl-0.5">
      <label htmlFor={id} className="pt-1">№ загр.</label>
      <div className="flex gap-1">
        <input id={id} defaultValue={value} className="h-[21px] w-[37px] border-b border-[#888] bg-white pb-1 pl-1.5" />
        <span className="flex flex-col gap-px">
          <button type="button" aria-label="Больше" className="flex h-2.5 w-[15px] rotate-180 items-center justify-center border border-[#aaa]"><Caret color="#000" /></button>
          <button type="button" aria-label="Меньше" className="flex h-2.5 w-[15px] items-center justify-center border border-[#aaa]"><Caret color="#000" /></button>
        </span>
      </div>
    </div>
  );
}

function ConvertDialog() {
  const items = ['Узловые перемещения', 'Инерционные силы', 'Нагрузка на фрагмент', 'Отпор грунта'];
  return (
    <Dialog title="Преобразование результатов" tint="bg-[#eef2fb]" className="top-36 left-[985px] w-[253px]">
      <div className="pt-1 pr-1 pl-2">
        <Box legend="Преобразование результатов в нагрузки" inner="flex gap-1.5 px-[3px] pb-1">
          <div className="flex w-[87px] flex-col gap-2.5 border border-[#dcdcdc] pt-2.5 pl-[3px]">
            <Radio name="src" label="Загружение" checked /><Radio name="src" label="РСН" disabled />
          </div>
          <div className="h-[54px] flex-1 border border-[#dcdcdc] pt-[3px]"><Stepper id="from" value="19" /></div>
        </Box>
        <Box legend="Куда" className="mt-1" inner="-mt-1 pr-1 pb-2 pl-[98px]">
          <Stepper id="to" value="32" />
        </Box>
        <Box legend="Что" className="mt-[3px]" inner="pt-0.5 pr-3 pb-1 pl-4">
          <div className="relative">
            <select aria-label="Что" className="block h-[21px] w-full appearance-none border border-[#005fb8] bg-[#cce4f7]" defaultValue="">
              <option value="" />
            </select>
            <Svg w={8} h={5} box="0 0 8 5" className="absolute top-2 right-1.5"><path d="M0 0l4 4 4-4" fill="none" stroke="#555" /></Svg>
            <ul className="absolute top-[21px] left-0 z-10 w-full border border-[#005fb8] bg-white shadow-[3px_3px_2px_#0006]">
              {items.map((t, i) => (
                <li key={t} className={`h-[13px] pl-px leading-[13px] ${i === 3 ? 'bg-[#6b467c] text-[#ff8f92]' : ''}`}>{t}</li>
              ))}
            </ul>
          </div>
        </Box>
        <p className="mt-3 ml-3 leading-4">К</p>
        <Box legend="У" className="mt-0.5" inner="flex gap-6 pt-1 pb-1.5 pl-3.5">
          <Radio name="who" label="Для всех" checked /><Radio name="who" label="Для выбранных" />
        </Box>
        <div className="flex justify-end gap-[3px] pt-2.5 pb-0.5">
          <DialogButton kind="ok" /><DialogButton kind="no" /><DialogButton kind="help" />
        </div>
      </div>
    </Dialog>
  );
}

function Tooltip() {
  return (
    <aside role="tooltip" className="absolute top-4 right-[67px] flex w-[251px] gap-2 rounded-xs border border-[#b84a4c] bg-linear-to-b from-[#ff9494] to-[#e0787a] p-1 text-[#8c2a2c]">
      <Svg w={22} h={24}><ConvertArt /></Svg>
      <div className="text-[11px] leading-[13px] whitespace-nowrap">
        <strong className="font-semibold">Преобразовать результаты в нагрузки</strong>
        <p className="mt-1">Преобразование результатов<br />расчета в нагрузки на расчетную<br />схему</p>
      </div>
    </aside>
  );
}

/* ---------- right toolbar ---------- */

const Gear = () => <path d="M13 2h5l1 4 4 2 4-2 3 4-3 3v5l3 3-3 4-4-1-4 2-1 4h-5l-1-4-4-2-4 1-3-4 3-3v-5L1 10l3-4 4 2 4-2zM15.500 10a6 6 0 1 0 .1 0z" fill="#c7cee2" fillRule="evenodd" stroke="#5a6484" />;
const Pencil = () => <g><path d="M10 29l2-6L26 9l4 4-14 14z" fill="#ffc03a" stroke="#8a5a20" /><path d="M26 9l4 4 2-3-4-4z" fill="#e8a0a0" /><path d="M10 29l1-4 3 2z" fill="#222" /></g>;
const Bars = () => <g><path d="M0 2h5v8H0z" fill="#962a1c" /><path d="M0 10h5v8H0z" fill="#f0842a" /><path d="M0 18h5v7H0z" fill="#ffee14" /></g>;
const Beam = ({ x = 0 }) => <g transform={`translate(${x} 0)`}><path d="M6 7L16 1h10L18 8z" fill="#5f8490" /><path d="M14 26l8-14 4-8v14L18 29z" fill="#9fb5bc" /><path d="M6 7h12v3h-4v15h4v4H6v-4h4V10H6z" fill="#22404c" /></g>;
const ULoop = () => <g><path d="M1 9l9-6v4h8c15 0 15 18 3 20h-5v-4h4c7-2 7-11-2-11h-8v4z" fill="#4fae3a" stroke="#1d5a1a" /><path d="M13 8h4v14h4l-6 8-6-8h4z" fill="#2f2a7a" /></g>;

const side: (null | { n: string; on?: boolean; d: React.ReactNode })[] = [
  { n: 'Настройки расчета', d: <><Gear /><path d="M13 13a9 9 0 1 1 2 13" fill="none" stroke="#1f4f6c" strokeWidth="3" /><Pencil /></> },
  { n: 'Настройки', d: <><Gear /><Pencil /></> },
  { n: 'Удалить значения', d: <><path d="M4 4h5v17h3l-6 8-6-8h4z" fill="#3a4fa0" /><text x="10" y="13" fontSize="15" fontFamily="Liberation Sans" fill="#222">1,2</text><path d="M13 14l15 15M28 14L13 29" stroke="#c8201c" strokeWidth="3.500" /></> },
  { n: 'Номера', d: <><path d="M1 3h14v13H1z" fill="#d81c1c" stroke="#000" /><path d="M1 16h14v13H1z" fill="#1a8fd0" stroke="#000" /><text x="4" y="14" fontSize="13" fontWeight="bold" fill="#ff8" fontFamily="Liberation Sans">2</text><text x="4" y="28" fontSize="13" fontWeight="bold" fill="#fff" fontFamily="Liberation Sans">6</text><path d="M19 3h12v26H19zM31 16H19" fill="none" stroke="#000" strokeWidth="1.500" /></> },
  { n: 'Эпюра 1.2', d: <><path d="M2 16h28" stroke="#2b3f68" strokeWidth="2" /><path d="M3 5c8 0 10 6 14 10s6 11 14 11" fill="none" stroke="#b82020" strokeWidth="3" strokeDasharray="3 2" /><circle cx="3" cy="16" r="2" fill="#8c6" stroke="#363" /><circle cx="29" cy="16" r="2" fill="#8c6" stroke="#363" /><text x="16" y="9" fontSize="12" fontFamily="Liberation Sans">1.2</text><text x="0" y="29" fontSize="12" fontFamily="Liberation Sans">1.2</text></> },
  { n: 'Вернуть', d: <ULoop /> },
  { n: 'Вернуть 1', d: <><g transform="translate(5 0) scale(.85 1)"><ULoop /></g><text x="0" y="28" fontSize="15" fontWeight="bold" fontFamily={SERIF} fill="#2f2a7a">1</text></> },
  null,
  { n: 'EF', d: <><Bars /><path d="M10 22L27 6l5 4-17 18z" fill="#a8b8c0" stroke="#445" /><text x="6" y="13" fontSize="17" fontFamily="Liberation Sans" fill="#2d3350">EF</text><circle cx="11" cy="24" r="5" fill="#fff" stroke="#222" strokeWidth="2" /><path d="M19 25h11M24.500 20v11" stroke="#3244a0" strokeWidth="4" /></> },
  { n: 'Армирование', d: <><Bars /><path d="M7 10l7-7h17v18l-6 9H7z" fill="#8fa597" stroke="#3a4a40" /><path d="M7 10h18v20M25 10l6-7" fill="none" stroke="#3a4a40" /><path d="M9 17l4-5M16 17l4-5M6 30l4-5M13 30l4-5M19 30l4-5" stroke="#c41c44" strokeWidth="2.500" /></> },
  { n: 'Сталь', d: <><Bars /><Beam x={5} /></> },
  { n: 'Кирпич', d: <><g transform="translate(1 -4)"><Bricks /></g><Bars /></> },
  null,
  { n: 'Профиль', d: <Beam x={2} /> },
  { n: '3D стержни', on: true, d: <><path d="M1 20L20 3l11-2v11L18 30" fill="#5f7890" stroke="#1d2d40" /><path d="M1 20h18v11H1z" fill="#e4eef6" stroke="#1d2d40" /><path d="M12 8h10v8H12z" fill="#cfdfec" stroke="#1d2d40" /></> },
  { n: '3D пластины', d: <><path d="M1 10l8-7h22l-5 7z" fill="#c8ced2" stroke="#667" /><path d="M26 10l5-7v6l-3 4v10h-3z" fill="#b8bfc4" stroke="#667" /><path d="M1 10h25v6H1zM7 16h8v9H7z" fill="#aeb7bd" stroke="#667" /><path d="M16 16h7v15h-7z" fill="#7f93c8" stroke="#446" /></> },
  { n: 'Труба', d: <><path d="M3 14L20 2h11L18 14z" fill="#0f86b8" /><path d="M18 14L31 2v11L20 30z" fill="#ffd21c" /><path d="M3 14h16v16H3z" fill="#c9d0d4" stroke="#667" /><path d="M7 18h8v8H7z" fill="#555" /></> },
  { n: 'Пластина', on: true, d: <path d="M10 4h21l-9 24H1z" fill="none" stroke="#1e3f57" strokeWidth="2.500" /> },
  { n: 'Сетка', d: <><path d="M10 4h21l-9 24H1z" fill="none" stroke="#2b2c66" strokeWidth="1.500" /><path d="M17 4L8 28M24 4l-9 24M7 12h21M4 20h21" stroke="#667" /></> },
  null,
];

function SideBar() {
  return (
    <aside className="flex w-12 shrink-0 flex-col border-l-2 border-[#8f959e] bg-linear-to-r from-[#cdd0d6] to-[#969ca6]">
      <div className="mx-auto mt-1 mb-1 w-[30px] border-t-2 border-dotted border-[#222]" />
      <div className="flex flex-1 flex-col items-center">
        {side.map((s, i) =>
          s ? (
            <button
              key={i}
              type="button"
              aria-label={s.n}
              className={`flex h-11 w-[43px] items-center justify-center ${s.on ? 'rounded-xs border border-[#d8c8a0] bg-linear-to-b from-[#fbcf9c] via-[#ffb04e] via-40% to-[#ffe682]' : ''}`}
            >
              <Svg w={29} h={29}>{s.d}</Svg>
            </button>
          ) : (
            <hr key={i} className="my-[3px] w-7 border-t border-b border-t-[#444] border-b-white" />
          ),
        )}
      </div>
      <div className="flex h-5 items-center justify-around bg-[#5a5f68] text-white"><Caret color="#fff" /><Svg w={11} h={11} box="0 0 11 11"><path d="M1 1v9" stroke="#fff" /><path d="M4 1l6 4-6 5z" fill="#ccc" /></Svg></div>
    </aside>
  );
}

/* ---------- bottom toolbar ---------- */

const Lens = ({ children }: { children: React.ReactNode }) => (
  <>
    <circle cx="16" cy="16" r="15" fill="none" stroke="#eef2f8" strokeWidth="2" />
    <circle cx="16" cy="16" r="13.500" fill="#e4f0fa" stroke="#5878b0" strokeWidth="1.500" />
    {children}
    <circle cx="29" cy="27" r="2" fill="#f4f4f4" />
  </>
);
const FrameRed = ({ hook = false }) => (
  <g strokeWidth="2" fill="none">
    <path d="M3 30V5h14M3 17h14M16 17v13M29 17v13" stroke="#27496a" />
    <path d="M16 5h13v12H16z" stroke="#d81c1c" />
    {hook && <path d="M13 17c0-16 8-17 14-14" stroke="#c8201c" strokeWidth="3" />}
    {hook && <path d="M9 14h8l-4 6z" fill="#a01c1c" />}
    <g fill="#8fd07a" stroke="#4a8a3a" strokeWidth="1"><circle cx="3" cy="5" r="2.500" /><circle cx="3" cy="17" r="2.500" /></g>
    <g fill="#fff" stroke="#d81c1c" strokeWidth="1.500"><circle cx="16" cy="5" r="2" /><circle cx="29" cy="5" r="2" /><circle cx="16" cy="17" r="2" /><circle cx="29" cy="17" r="2" /></g>
  </g>
);
const Boxes = ({ x = 8, cross = 'top' }) => (
  <g transform={`translate(${x} 0)`} fill="none" strokeWidth="2">
    <path d="M2 2h12v12H2z" stroke="#1878b8" />
    <path d="M2 17h12v13H2z" stroke="#c81458" />
    {cross === 'top' && <path d="M-1 0l18 15M17 0L-1 15" stroke="#2a7a2a" strokeWidth="1.500" />}
    {cross === 'bot' && <path d="M-1 16l18 15M17 16L-1 31" stroke="#2a7a2a" strokeWidth="1.500" />}
  </g>
);
const Cage = ({ red = false }) => (
  <g fill="none" stroke={red ? '#6a7f98' : '#4d5a80'} strokeWidth={red ? 1.5 : 2}>
    {red ? (
      <>
        <path d="M4 7l7-6h17l-6 6zM4 15l7-6h17l-6 6zM4 23l7-6h17l-6 6zM4 31l7-6h17l-6 6zM4 7v24M22 7v24M28 1v24M11 1v24" />
        <path d="M4 13l7-6h17l-6 6zM4 13v8h18v-8" stroke="#d81c1c" />
      </>
    ) : (
      <path d="M5 31V8L12 2h17v20M5 8h16v23M21 8l8-6M5 18h16l8-7M13 8v19M12 2v9M5 13l16 0" />
    )}
  </g>
);
const Magnifier = () => (
  <g><path d="M18 19l11 11" stroke="#111" strokeWidth="4.500" /><circle cx="12" cy="11" r="9.500" fill="#b9d6f2" stroke="#6f7f92" strokeWidth="2" /></g>
);

const AxisIcon = ({ a, b, t }: { a: string; b: string; t?: string }) => (
  <>
    <path d="M6 28V6" stroke={a} strokeWidth="2" /><path d="M6 0l3 8H3z" fill={a} />
    <path d="M6 28h20" stroke={b} strokeWidth="2" /><path d="M32 28l-8-3v6z" fill={b} />
    {t ? <text x="10" y="20" fontSize="14" fontFamily="Liberation Sans" fontWeight="bold" fill="#444">{t}</text> : null}
    {t ? <circle cx="6" cy="28" r="2.500" fill={t === 'XY' ? '#e01c28' : '#34308c'} /> : null}
  </>
);

interface Tool { n: string; w: string; arrow?: boolean; on?: boolean; d: React.ReactNode }
const R = '#e01c28', G = '#129a48', B = '#34308c';

const tools: (null | Tool)[] = [
  { n: 'Многоугольник', w: 'w-[46px]', d: <path d="M9 4l7 4 9-5-1 11 7 5-9 3-4 9-5-8-11 1 5-8-4-8z" fill="none" stroke="#a8202c" strokeWidth="2" strokeDasharray="3 2" /> },
  { n: 'Узлы', w: 'w-[46px]', arrow: true, d: <Lens><path d="M16 3v26M3 16h26" stroke="#1e3f57" strokeWidth="2.500" /><circle cx="16" cy="16" r="5" fill="#9bd06a" stroke="#3a6a1a" /></Lens> },
  { n: 'Рама', w: 'w-[46px]', d: <FrameRed /> },
  { n: 'Стержни', w: 'w-11', arrow: true, on: true, d: <Lens><path d="M6 16h20" stroke="#1e3f57" strokeWidth="2.500" /><circle cx="6" cy="16" r="3.500" fill="#9bd06a" stroke="#3a6a1a" /><circle cx="26" cy="16" r="3.500" fill="#9bd06a" stroke="#3a6a1a" /></Lens> },
  { n: 'Вертикальные', w: 'w-11', d: <Lens><path d="M13 4v24M19 4v24" stroke="#1e3f57" strokeWidth="3" /></Lens> },
  { n: 'Горизонтальные', w: 'w-11', d: <Lens><path d="M4 13h24M4 19h24" stroke="#1e3f57" strokeWidth="3" /></Lens> },
  { n: 'Звезда', w: 'w-11', d: <Lens><path d="M16 16V3M16 16L7 26M16 16l12-2M16 16l7 11M16 16L3 14" stroke="#1e3f57" strokeWidth="2.500" /><circle cx="16" cy="16" r="4" fill="#9bd06a" stroke="#3a6a1a" /></Lens> },
  { n: 'Сетка', w: 'w-11', arrow: true, d: <Lens><path d="M11 4v24M21 4v24M4 11h24M4 21h24" stroke="#1e3f57" strokeWidth="2.500" /></Lens> },
  { n: 'Жесткость', w: 'w-12', arrow: true, d: <Lens><text x="4" y="23" fontSize="19" fontFamily="Liberation Sans" fill="#2b2c55">EF</text></Lens> },
  { n: 'Цвет', w: 'w-12', arrow: true, d: <Lens><path d="M6 5l18 18" stroke="#1e2f57" strokeWidth="4" /><path d="M17 19l7 7" stroke="#e0b01c" strokeWidth="2" /><path d="M16 15l10 10" stroke="#c8201c" strokeWidth="2" /></Lens> },
  { n: 'Диаграмма', w: 'w-11', d: <><path d="M3 28l5-5h23l-5 7H3z" fill="#b8cc6a" stroke="#5a6a2a" /><path d="M3 7l8-5v20l-8 5z" fill="#8ea4d8" stroke="#2d3d6a" /><path d="M18 12h4v13h-4zM25 15h4v9h-4z" fill="#d83a7a" stroke="#7a1448" /></> },
  { n: 'Фильтр', w: 'w-11', d: <path d="M2 4h28v3L19 18v12h-5V18L2 7z" fill="#c2d3d0" stroke="#44605c" strokeWidth="1.500" /> },
  { n: 'Поменять местами', w: 'w-11', d: <><Boxes x={3} cross="" /><path d="M23 6c8 6 8 14 0 20" fill="none" stroke="#2a8a2a" strokeWidth="2" /><path d="M20 5l7-2-1 7zM20 27l7 2-1-7z" fill="#2a8a2a" /></> },
  { n: 'Вернуть раму', w: 'w-[42px]', d: <FrameRed hook /> },
  { n: 'Кисть', w: 'w-[42px]', d: <><path d="M16 1h4l1 17h-6z" fill="#2a8a3a" /><path d="M13 17h10l2 13H11z" fill="#c8ccb8" stroke="#777" /><path d="M15 20l-1 10M18 20v10M21 20l1 10" stroke="#888" /></> },
  null,
  { n: 'Вид 1', w: 'w-11', d: <Boxes /> },
  { n: 'Вид 2', w: 'w-11', d: <><path d="M3 28V6M3 28h24" stroke="#333" strokeWidth="2" /><path d="M3 1l3 7H0zM32 28l-7-3v6z" fill="#333" /><g transform="translate(10 2) scale(.75)"><Boxes x={3} /></g></> },
  { n: 'Вид 3', w: 'w-[45px]', d: <Boxes cross="bot" /> },
  { n: 'Вид 4', w: 'w-11', d: <><Boxes x={12} /><path d="M18 6C8 3 3 10 4 19" fill="none" stroke="#34308c" strokeWidth="3.500" /><path d="M0 16l9 1-4 8z" fill="#34308c" /></> },
  { n: 'Каркас', w: 'w-11', d: <Cage /> },
  { n: 'Фрагмент каркаса', w: 'w-11', d: <Cage red /> },
  null,
  { n: 'Поиск', w: 'w-11', d: <Magnifier /> },
  { n: 'Сброс поиска', w: 'w-11', d: <><Magnifier /><path d="M12 5l14 12M26 5L12 17" stroke="#d8141c" strokeWidth="4" /></> },
  null,
  { n: 'Фонарик', w: 'w-10', d: <><path d="M1 4l5-3 12 12-6 5z" fill="#555" /><path d="M12 18l7-6 9 3-7 15z" fill="#c8401c" /><path d="M17 20l12-4v14H16z" fill="#ffe030" /></> },
  { n: 'Длина', w: 'w-[46px]', arrow: true, d: <><path d="M5 24h22" stroke="#4a6a9a" strokeWidth="2" strokeDasharray="2 2" /><circle cx="3" cy="24" r="2.500" fill="#8c6" stroke="#363" /><circle cx="29" cy="24" r="2.500" fill="#8c6" stroke="#363" /><text x="10" y="20" fontSize="18" fontStyle="italic" fontWeight="bold" fontFamily={SERIF} fill="#223a66">L</text></> },
  { n: 'Карандаш', w: 'w-[42px]', d: <><path d="M5 30l2-7L25 3l4 4-18 19z" fill="#ffc03a" stroke="#8a5a20" /><path d="M25 3l4 4 2-2-4-4z" fill="#e88" /><path d="M5 30l1-4 3 2z" fill="#222" /></> },
  { n: 'Параметры', w: 'w-[46px]', d: <><Gear /><Pencil /></> },
];

const views: Tool[] = [
  { n: 'Изометрия', w: 'w-11', d: <><AxisIcon a={R} b={G} /><path d="M6 28L22 12" stroke={B} strokeWidth="2" /><path d="M26 8l-2 8-5-5z" fill={B} /></> },
  { n: 'XYZ', w: 'w-[46px]', d: <><path d="M16 26V6" stroke={R} strokeWidth="2" /><path d="M16 1l3 7h-6z" fill={R} /><path d="M16 28L4 20" stroke={B} strokeWidth="2" /><path d="M1 18l7 1-4 5z" fill={B} /><path d="M16 28l13-8" stroke={G} strokeWidth="2" /><path d="M32 18l-7 1 4 5z" fill={G} /><text x="20" y="8" fontSize="10" fontFamily="Liberation Sans">Z</text><text x="1" y="16" fontSize="10" fontFamily="Liberation Sans">Y</text><text x="25" y="16" fontSize="10" fontFamily="Liberation Sans">X</text></> },
  { n: 'XZ', w: 'w-[46px]', arrow: true, d: <AxisIcon a={R} b={G} t="XZ" /> },
  { n: 'XY', w: 'w-[46px]', arrow: true, on: true, d: <AxisIcon a={B} b={G} t="XY" /> },
  { n: 'YZ', w: 'w-11', arrow: true, d: <AxisIcon a={R} b={B} t="YZ" /> },
  { n: 'Плоскость', w: 'w-11', d: <><path d="M8 4h24l-6 24H1z" fill="#b8d4ea" /><path d="M6 26l5-14h16l-5 14M8 20h16M19 12l-5 14" fill="none" stroke="#22406a" strokeWidth="2" /></> },
  { n: 'Повернуть', w: 'w-12', arrow: true, d: <><path d="M8 7a12 12 0 1 0 16-1" fill="none" stroke="#34447c" strokeWidth="3.500" /><path d="M1 11L8 1l7 8z" fill="#34447c" /></> },
  { n: 'Проекция', w: 'w-[46px]', d: <><AxisIcon a={R} b={R} /><path d="M6 28L22 12" stroke={R} strokeWidth="2" /><path d="M26 8l-2 8-5-5z" fill={R} /></> },
];

function ToolItem({ t }: { t: Tool }) {
  return (
    <div className={`flex h-[42px] items-center ${t.on ? 'rounded-xs border border-[#e0c890] bg-linear-to-b from-[#fbcf9c] via-[#ffb04e] via-40% to-[#ffe682]' : ''}`}>
      <button type="button" aria-label={t.n} className={`flex items-center justify-center ${t.w}`}><Svg w={29} h={29}>{t.d}</Svg></button>
      {t.arrow && <button type="button" aria-label={`${t.n}: меню`} className="flex w-[19px] justify-center"><Caret big /></button>}
    </div>
  );
}

const Grip = () => <div className="h-7 shrink-0 border-l-2 border-dotted border-[#222]" />;
const More = () => (
  <div className="flex h-12 w-[19px] shrink-0 flex-col items-center justify-end gap-1 rounded-r-md bg-linear-to-b from-[#7d838c] to-[#4b4f57] pb-1"><i className="h-px w-2.5 bg-white" /><Caret color="#fff" /></div>
);

function BottomBar() {
  const bar = 'flex h-12 shrink-0 items-center bg-linear-to-b from-[#cfd2d8] to-[#8b919c]';
  return (
    <div className="flex h-12 shrink-0 overflow-hidden bg-[#505050]">
      <div className={`${bar} pl-1.5`}>
        <Grip />
        {tools.map((t, i) => (t ? <ToolItem key={i} t={t} /> : <i key={i} className="mx-[5px] h-7 w-px bg-[#555]" />))}
      </div>
      <More />
      <div className={`${bar} pl-1.5`}>
        <Grip />
        {views.map(t => <ToolItem key={t.n} t={t} />)}
      </div>
      <More />
    </div>
  );
}

/* ---------- status bar ---------- */

function StatusButton({ on, n, children }: { on?: boolean; n: string; children: React.ReactNode }) {
  return (
    <button type="button" aria-label={n} className={`flex h-5 w-6 shrink-0 items-center justify-center border border-[#aab4b8] ${on ? 'bg-linear-to-b from-[#fbc98c] to-[#ffe68a]' : 'bg-[#cdd8dc]'}`}>
      <Svg w={16} h={15}>{children}</Svg>
    </button>
  );
}

function Combo({ value, className, label }: { value: string; className: string; label: string }) {
  return (
    <div className={`relative h-5 shrink-0 ${className}`}>
      <select aria-label={label} className="block h-full w-full appearance-none border border-[#999] bg-[#f0f0f0] pr-2.5 pl-0.5 text-[11px] leading-4 text-black">
        <option>{value}</option>
      </select>
      <span className="pointer-events-none absolute top-2 right-1"><Caret color="#777" /></span>
    </div>
  );
}

const Loop = ({ c = '#9aa2a4' }) => <path d="M2 8l9-6v4h7c14 0 14 20 2 22H9v-5h10c6-1 6-11-1-11h-7v4z" fill={c} />;
const Up = () => <path d="M2 26L11 8h10l9 18z" fill="#9a9fa2" />;
const Down = () => <path d="M2 6h28L20 26h-8z" fill="#9a9fa2" />;

function StatusBar() {
  const sep = <i className="mx-0.5 h-5 w-[3px] shrink-0 border-x border-l-[#222] border-r-[#999] bg-[#666]" />;
  return (
    <footer className="flex h-6 shrink-0 overflow-hidden bg-linear-to-b from-[#454954] via-[#363636] via-30% to-[#303030]">
      <div className="flex-1" />
      <div className="flex w-[1136px] shrink-0 items-center border-l border-black bg-linear-to-b from-[#b4b4b4] via-[#8a8a8a] to-[#6e6e6e] pl-1.5 text-[11px]">
        <StatusButton on n="Вернуть"><Loop c="#3a9a2a" /><path d="M6 30l2-7 12-12 4 4-13 13z" fill="#ffc83a" stroke="#850" /></StatusButton>
        <StatusButton n="Вернуть 1"><Loop /></StatusButton>
        <StatusButton n="Вернуть 2"><Loop /></StatusButton>
        <StatusButton n="Вернуть 3"><Loop /></StatusButton>
        <Combo value="" label="Вид" className="w-[112px]" />
        {sep}
        <StatusButton n="Вверх"><Up /></StatusButton>
        <StatusButton n="Вниз"><path d="M4 6h24L16 26z" fill="#3a8a3a" stroke="#145014" /></StatusButton>
        <Combo value="<19> Этаж_19" label="Этаж" className="w-[134px]" />
        {sep}
        <StatusButton on n="Схема"><path d="M3 5v22M3 14c6 0 8 6 18 5M0 10l6-3M0 20l6-3" fill="none" stroke="#222" strokeWidth="2.500" /><path d="M22 4v12M18 11l4 6 4-6" stroke="#223a9a" strokeWidth="2.500" fill="none" /></StatusButton>
        <StatusButton n="Форма"><path d="M4 14v10c8 8 24-4 22-18-8-2-12 8-6 18" fill="none" stroke="#8d9598" strokeWidth="3" /></StatusButton>
        <StatusButton n="Движение"><path d="M16 2v28M10 8h12M8 18h14M10 28h12" stroke="#8d9598" strokeWidth="3" /></StatusButton>
        <StatusButton n="Форма вверх"><Up /></StatusButton>
        <StatusButton n="Форма вниз"><Down /></StatusButton>
        <Combo value="" label="Форма" className="w-[54px]" />
        <span className="w-1" />
        <Combo value="Верхни" label="Слой" className="w-[55px]" />
        <span className="w-1.5" />
        <StatusButton n="Принять"><path d="M4 16l8 9L28 3l-3 14-12 14z" fill="#8d9598" /></StatusButton>
        <StatusButton on n="Номера"><text x="0" y="20" fontSize="20" fontWeight="bold" fontFamily={SERIF} fill="#7a5a10">№</text><path d="M10 16l7 8L30 3l-5 15-8 13z" fill="#6a9a2a" /></StatusButton>
        {sep}
        <StatusButton n="Молоток"><path d="M4 28L20 8l4 3L9 31z" fill="#e8a82a" stroke="#850" /><path d="M12 3l12 2 6 7-4 3-6-6-8-2z" fill="#667" /></StatusButton>
        <Combo value="1." label="Единицы" className="w-[55px]" />
        <div className="ml-0.5 flex h-full flex-1 items-center border-l-2 border-[#333] pl-1 whitespace-nowrap">Уз.: 0 / 360752</div>
        <div className="flex h-full flex-1 items-center border-l-2 border-[#333] pl-1 whitespace-nowrap">Эл.: 0 / 356895</div>
        <div className="flex h-full w-[83px] items-center border-l-2 border-[#333] pl-1 whitespace-nowrap">Загр.: 1 / 30</div>
      </div>
    </footer>
  );
}

export default function App() {
  return (
    <div className="flex min-h-screen bg-white pr-2 pb-2.5 pl-[7px] font-['Noto_Sans',sans-serif]">
      <div className="flex min-w-0 flex-1 flex-col overflow-hidden border-t border-r border-l border-t-[#0a84e8] border-r-[#0a4ac0] border-l-[#0aa0f0]">
        <TitleBar />
        <TabStrip />
        <Ribbon />
        <main className="relative flex flex-1 border-t-2 border-[#484848]">
          <Pane name="1_Rz.lir" className="flex-[52_1_0%]">
            <Scale className="mr-12 ml-[52px]" />
            <div className="mt-3 pl-1 text-[19px] leading-[19px] whitespace-pre">
              <p className="w-max bg-[#ff9494] pt-0.5 pr-4 pb-[3px] pl-0.5 text-[#7a0000]">32.32: Отпор грунта (№ загр.  19)</p>
              <p className="pl-0.5">Мозаика q(площ.) вдоль оси  Z(G)</p>
              <p className="pl-0.5">Единицы измерения - т/м2</p>
            </div>
            <svg viewBox="10 331 941 656" className="block w-full" role="img" aria-label="План">
              <PlanShape />
              <Axes x={53} y={964} />
            </svg>
          </Pane>
          <div className="w-[7px] shrink-0 border-x border-[#a0a0a0] bg-[#ececec]" />
          <Pane name="1.lir" bold className="flex-[50_1_0%]">
            <Scale className="mx-12" />
            <div className="-mt-0.5 text-[19px] leading-[19px] whitespace-pre">
              <p className="pl-0.5">19.Этаж_19</p>
              <p className="w-max bg-[#ff9494] pr-1 pl-0.5 text-[#7a0000]">Мозаика напряжений по Rz</p>
              <p className="pl-0.5">Единицы измерения - т/м2</p>
            </div>
            <svg viewBox="960 312 903 676" className="block w-full" role="img" aria-label="План">
              <g transform="translate(968 615.300) scale(.988) translate(-26.600 -608.700)"><PlanShape /></g>
              <Axes x={1000} y={963} />
              <text x="1022" y="974" fontSize="19" fontFamily={SERIF}>Отм. -3.400</text>
            </svg>
          </Pane>
          <SideBar />
          <LoadsDialog />
          <ConvertDialog />
          <Tooltip />
          <svg width="220" height="180" viewBox="888 636 220 180" className="pointer-events-none absolute top-[451px] left-[879px]" aria-hidden="true">
            <g transform="translate(700 600) scale(.4082 .33333)" fill="#ff0000">
              <path d="M932 124C936 117 946 120 946 130C938 215 890 320 800 400C745 450 680 478 600 487C586 488 584 473 598 469C690 450 760 410 810 345C870 275 908 205 932 124Z" />
              <path d="M473 517C520 455 590 375 643 334C652 330 655 340 650 347C620 395 555 465 504 508C580 515 665 560 736 612C744 620 738 632 728 629C650 595 590 545 480 525Z" />
            </g>
          </svg>
        </main>
        <BottomBar />
        <StatusBar />
      </div>
    </div>
  );
}
